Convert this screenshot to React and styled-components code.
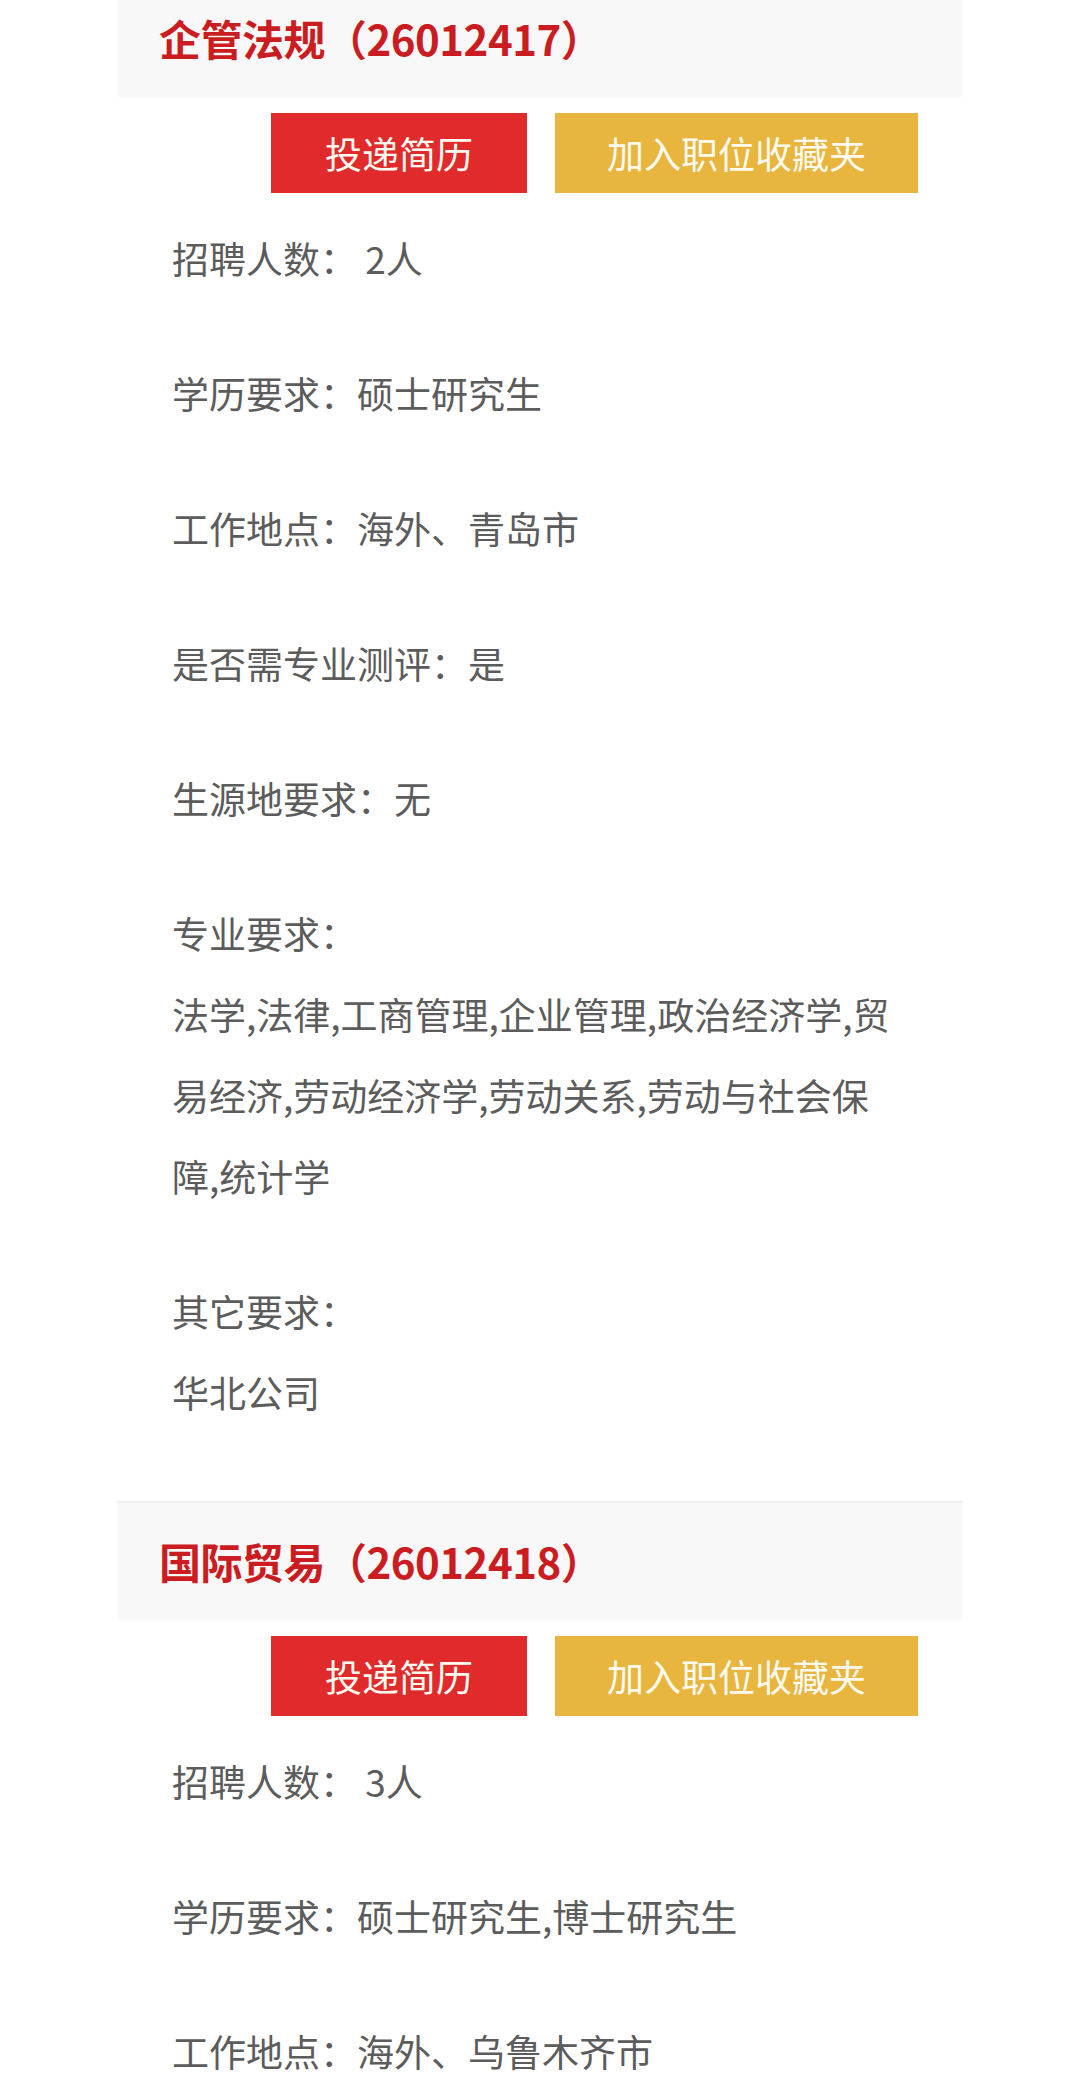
import React from 'react'
import styled, {createGlobalStyle} from 'styled-components'

const GlobalStyle = createGlobalStyle`
    html, body {
        margin: 0;
        padding: 0;
        background: #ffffff;
    }
    body {
        font-family: "Noto Sans CJK SC", "Noto Sans", sans-serif;
        overflow: hidden;
    }
`;

const Page = styled.div`
    width: 844px;
    margin: -22px auto 0 auto;
`;

const Section = styled.div`
    padding-bottom: 14px;
`;

const Header = styled.div`
    height: 117px;
    display: flex;
    align-items: center;
    padding-left: 41px;
    background: #f8f8f8;
    border-top: 2px solid #efefef;
    box-sizing: border-box;
    box-shadow: 0 2px 3px rgba(0,0,0,0.03);
`;

const Title = styled.h2`
    margin: 0;
    font-size: 42px;
    font-weight: bold;
    color: #cb1c22;
    letter-spacing: -0.5px;
`;

const ButtonRow = styled.div`
    display: flex;
    justify-content: flex-end;
    gap: 28px;
    padding-right: 44px;
    margin-top: 18px;
    margin-bottom: 25px;
`;

const Button = styled.div`
    width: ${p => p.wide ? "363px" : "256px"};
    height: 80px;
    display: flex;
    align-items: center;
    justify-content: center;
    background: ${p => p.wide ? "#e8b53e" : "#e02a2c"};
    color: #fffaf0;
    font-size: 37px;
    cursor: pointer;
`;

const Field = styled.div`
    padding-left: 54px;
    margin-bottom: 54px;
    font-size: 37px;
    line-height: 81px;
    color: #5c5c5c;
    max-width: 726px;
`;

const Label = styled.span`
    white-space: nowrap;
`;

const Block = styled.div``;

const jobs = [
    {
        title: "企管法规（26012417）",
        fields: [
            {label: "招聘人数：", value: "2人", gap: true},
            {label: "学历要求：", value: "硕士研究生"},
            {label: "工作地点：", value: "海外、青岛市"},
            {label: "是否需专业测评：", value: "是"},
            {label: "生源地要求：", value: "无"},
            {label: "专业要求：", value: "法学,法律,工商管理,企业管理,政治经济学,贸易经济,劳动经济学,劳动关系,劳动与社会保障,统计学", block: true},
            {label: "其它要求：", value: "华北公司", block: true},
        ],
    },
    {
        title: "国际贸易（26012418）",
        fields: [
            {label: "招聘人数：", value: "3人", gap: true},
            {label: "学历要求：", value: "硕士研究生,博士研究生"},
            {label: "工作地点：", value: "海外、乌鲁木齐市"},
        ],
    },
];

function Job({job}){
    return(
        <Section>
            <Header>
                <Title>{job.title}</Title>
            </Header>
            <ButtonRow>
                <Button>投递简历</Button>
                <Button wide>加入职位收藏夹</Button>
            </ButtonRow>
            {job.fields.map((f, i) => (
                <Field key={i}>
                    {f.block ? (
                        <>
                            <Block><Label>{f.label}</Label></Block>
                            <Block>{f.value}</Block>
                        </>
                    ) : (
                        <><Label>{f.label}</Label>{f.gap ? '\u00a0' : ''}{f.value}</>
                    )}
                </Field>
            ))}
        </Section>
    );
}

export default function App(){
    return(
    <>
        <GlobalStyle />
        <Page>
            {jobs.map((j, i) => <Job key={i} job={j} />)}
        </Page>
    </>);
}
